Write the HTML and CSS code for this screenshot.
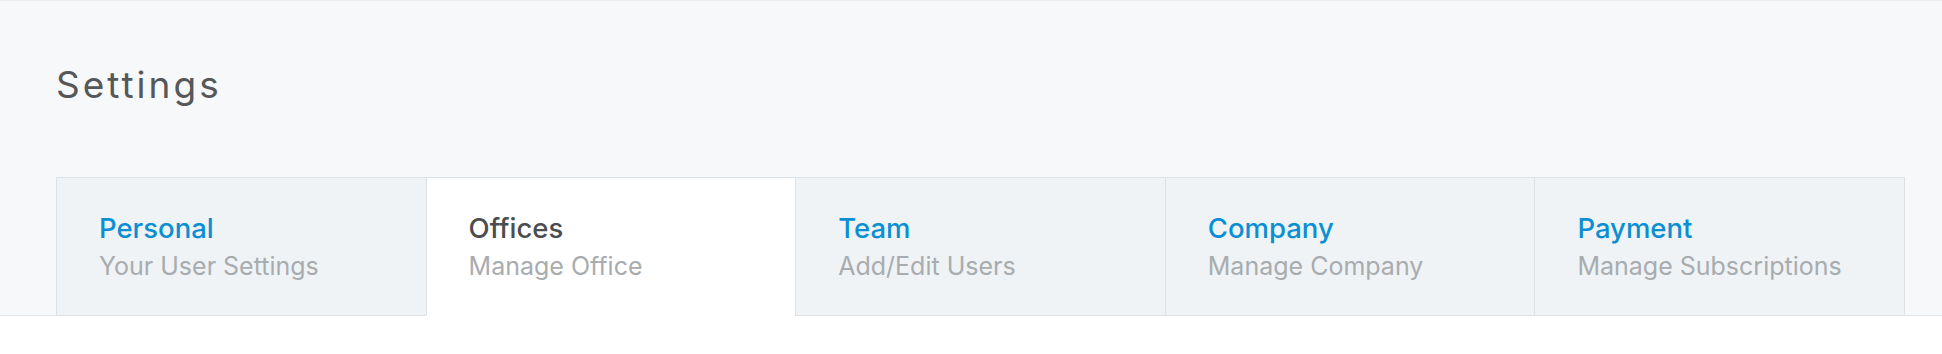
FILE: index.html
```html
<!DOCTYPE html>
<html lang="en">
<head>
<meta charset="utf-8">
<title>Settings</title>
<link rel="stylesheet" href="styles.css">
</head>
<body>
<header class="header">
  <h1 class="page-title">Settings</h1>
  <nav class="tabs">
    <a class="tab" href="#"><span class="tab-title">Personal</span><span class="tab-sub">Your User Settings</span></a>
    <a class="tab active" href="#"><span class="tab-title">Offices</span><span class="tab-sub">Manage Office</span></a>
    <a class="tab" href="#"><span class="tab-title">Team</span><span class="tab-sub">Add/Edit Users</span></a>
    <a class="tab" href="#"><span class="tab-title">Company</span><span class="tab-sub">Manage Company</span></a>
    <a class="tab" href="#"><span class="tab-title">Payment</span><span class="tab-sub">Manage Subscriptions</span></a>
  </nav>
</header>
</body>
</html>
```
FILE: styles.css
```css
html, body {
  margin: 0;
  padding: 0;
  background: #ffffff;
  font-family: Inter, "Noto Sans", sans-serif;
}

.header {
  background: #f7f8fa;
  border-top: 1px solid #eceef1;
  border-bottom: 1px solid #dfe3e7;
  padding: 0 37px 0 56px;
}

.page-title {
  margin: 0;
  padding-top: 62px;
  font-size: 37px;
  line-height: 44px;
  letter-spacing: 3px;
  font-weight: 400;
  color: #555759;
}

.tabs {
  display: flex;
  margin-top: 70px;
  margin-bottom: -1px;
}

.tab {
  flex: 1 1 0;
  display: flex;
  flex-direction: column;
  padding: 33px 40px 33px 42px;
  background: #eff3f6;
  border: 1px solid #dde2e6;
  text-decoration: none;
}

.tab + .tab {
  margin-left: -1px;
}

.tab.active {
  background: #ffffff;
  border-bottom-color: #ffffff;
}

.tab-title {
  font-size: 27.5px;
  line-height: 34px;
  font-weight: 500;
  color: #0b8fd3;
}

.tab.active .tab-title {
  color: #4b4d4f;
}

.tab-sub {
  margin-top: 6px;
  font-size: 25px;
  line-height: 31px;
  font-weight: 400;
  color: #a8acaf;
}
```
